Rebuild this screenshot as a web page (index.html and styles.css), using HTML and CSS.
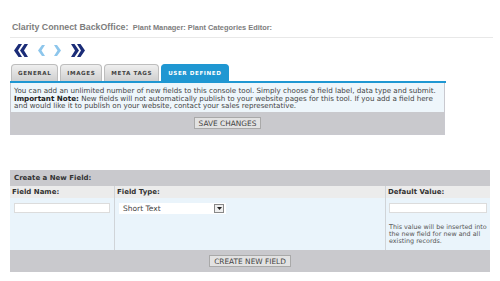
FILE: index.html
```html
<!DOCTYPE html>
<html lang="en">
<head>
  <meta charset="UTF-8">
  <title>Plant Categories Editor</title>
  <link rel="stylesheet" href="styles.css">
</head>
<body>
  <div class="page">
    <div class="header">
      <span class="app">Clarity Connect BackOffice:</span>
      <span class="crumb">Plant Manager: Plant Categories Editor:</span>
    </div>

    <div class="nav">
      <svg width="15" height="13" viewBox="0 0 15 13"><polygon points="5.5,0 9,0 5,6.5 9,13 5.5,13 1,6.5" fill="#1b2c78"/><polygon points="11.5,0 15,0 11,6.5 15,13 11.5,13 7,6.5" fill="#1b2c78"/></svg>
      <svg width="8" height="13" viewBox="0 0 8 13"><polygon points="5,1 8,1 4.5,6.5 8,12 5,12 1,6.5" fill="#8dc6ec"/></svg>
      <svg width="8" height="13" viewBox="0 0 8 13"><polygon points="3,1 0,1 3.5,6.5 0,12 3,12 7,6.5" fill="#8dc6ec"/></svg>
      <svg width="15" height="13" viewBox="0 0 15 13"><polygon points="3.5,0 0,0 4,6.5 0,13 3.5,13 8,6.5" fill="#1b2c78"/><polygon points="9.5,0 6,0 10,6.5 6,13 9.5,13 14,6.5" fill="#1b2c78"/></svg>
    </div>

    <div class="tabs">
      <div class="tab">GENERAL</div>
      <div class="tab">IMAGES</div>
      <div class="tab">META TAGS</div>
      <div class="tab active">USER DEFINED</div>
    </div>

    <div class="panel">
      <div class="intro">
        <p>You can add an unlimited number of new fields to this console tool. Simply choose a field label, data type and submit.</p>
        <p><b>Important Note:</b> New fields will not automatically publish to your website pages for this tool. If you add a field here</p>
        <p>and would like it to publish on your website, contact your sales representative.</p>
      </div>
      <div class="actions">
        <button class="btn">SAVE CHANGES</button>
      </div>
    </div>

    <table class="fields">
      <tr class="title-row">
        <td colspan="3">Create a New Field:</td>
      </tr>
      <tr class="label-row">
        <td class="col-name">Field Name:</td>
        <td class="col-type">Field Type:</td>
        <td class="col-default">Default Value:</td>
      </tr>
      <tr class="body-row">
        <td><input class="text-input name-input" type="text"></td>
        <td>
          <div class="select">
            <span class="select-text">Short Text</span>
            <span class="select-btn"><svg width="5" height="3" viewBox="0 0 5 3"><polygon points="0,0 5,0 2.5,3" fill="#222"/></svg></span>
          </div>
        </td>
        <td>
          <input class="text-input default-input" type="text">
          <p class="hint">This value will be inserted into the new field for new and all existing records.</p>
        </td>
      </tr>
      <tr class="foot-row">
        <td colspan="3"><button class="btn">CREATE NEW FIELD</button></td>
      </tr>
    </table>
  </div>
</body>
</html>
```

FILE: styles.css
```css
body {
  margin: 0;
  background: #fff;
  font-family: "DejaVu Sans", Verdana, sans-serif;
  color: #333;
}

.page {
  padding: 0 7px 0 10px;
}

.header {
  width: 481px;
  padding: 19px 0 3px 2px;
  border-bottom: 1px solid #e8e8e8;
  font-family: "Liberation Sans", Arial, sans-serif;
  font-weight: bold;
  color: #7d7d7d;
  line-height: 12px;
}

.app {
  font-size: 8.8px;
}

.crumb {
  font-size: 7.4px;
}

.nav {
  display: flex;
  align-items: center;
  gap: 9px;
  padding: 6px 0 0 3px;
  height: 13px;
}

.nav svg {
  display: block;
}

.tabs {
  display: flex;
  gap: 2px;
  margin-top: 7px;
  padding-left: 1px;
  width: 435px;
  border-bottom: 2px solid #1f97d2;
}

.tab {
  height: 16px;
  line-height: 16px;
  padding: 0 6px;
  font-size: 5.6px;
  font-weight: bold;
  letter-spacing: 0.6px;
  color: #444;
  background: linear-gradient(#efefef, #cfcfcf);
  border: 1px solid #bdbdbd;
  border-bottom: none;
  border-radius: 4px 4px 0 0;
}

.tab.active {
  color: #fff;
  background: #1f97d2;
  border-color: #1f97d2;
}

.panel {
  width: 433px;
  border: 1px solid #c9c9cf;
  border-top: none;
}

.intro {
  background: #eef6fb;
  padding: 3px 3px 4px;
  font-size: 7.15px;
  color: #444;
  white-space: nowrap;
}

.intro p {
  margin: 0;
  height: 7px;
  line-height: 9px;
  overflow: visible;
}

.intro p + p {
  margin-top: 0.5px;
}

.intro b {
  color: #222;
}

.actions {
  background: #c9c9cd;
  height: 22px;
  display: flex;
  align-items: center;
  justify-content: center;
}

.btn {
  font-family: "DejaVu Sans", Verdana, sans-serif;
  font-size: 7.4px;
  color: #444;
  background: #e2e2e2;
  border: 1px solid #a9a9a9;
  padding: 1px 4px;
  height: 12px;
  line-height: 9px;
}

.fields {
  margin-top: 35px;
  width: 480px;
  border-collapse: collapse;
  font-size: 7px;
}

.fields td {
  padding: 0;
  vertical-align: top;
}

.title-row td {
  background: #c9c9cd;
  height: 16px;
  line-height: 16px;
  padding-left: 4px;
  font-weight: bold;
  color: #333;
}

.label-row td {
  background: #ececec;
  height: 12px;
  line-height: 12px;
  padding-left: 2px;
  font-weight: bold;
  color: #333;
}

.col-name {
  width: 102px;
}

.col-default {
  width: 102px;
}

.body-row td {
  background: #eaf4fb;
  height: 52px;
  padding: 5px 3px 0 3px;
  box-sizing: border-box;
}

.label-row td + td,
.body-row td + td {
  border-left: 1px solid #d0d4d8;
}

.text-input {
  display: block;
  height: 10px;
  box-sizing: border-box;
  border: 1px solid #dcdcdc;
  background: #fff;
  padding: 0;
  margin: 0;
}

.name-input {
  width: 96px;
  margin-left: 1px;
}

.default-input {
  width: 98px;
}

.select {
  display: flex;
  align-items: center;
  justify-content: space-between;
  width: 107px;
  height: 11px;
  margin-left: 1px;
  box-sizing: border-box;
  padding: 0 2px 0 4px;
  background: #fff;
  font-family: "DejaVu Sans", Verdana, sans-serif;
  font-size: 7.5px;
  color: #444;
}

.select-btn {
  display: flex;
  align-items: center;
  justify-content: center;
  width: 8px;
  height: 7px;
  border: 1px solid #888;
  background: #eee;
}

.hint {
  margin: 11px 0 0;
  font-size: 6.4px;
  line-height: 7px;
  color: #555;
}

.foot-row td {
  background: #c9c9cd;
  height: 22px;
  text-align: center;
  vertical-align: middle;
}
```
